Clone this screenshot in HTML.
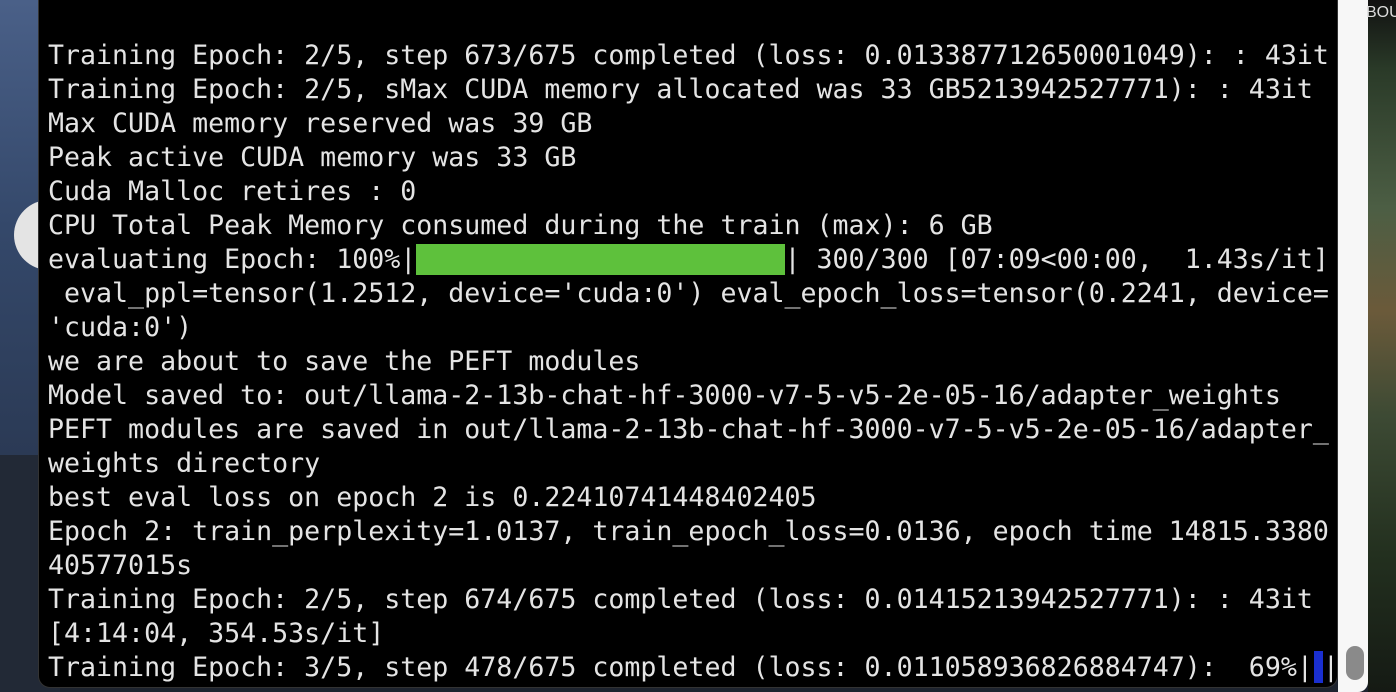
<!DOCTYPE html>
<html><head><meta charset="utf-8"><style>
html,body{margin:0;padding:0}
body{width:1396px;height:692px;overflow:hidden;position:relative;background:#1d232e}
.bgl{position:absolute;left:0;top:0;width:60px;height:455px;background:linear-gradient(180deg,#4a6088 0%,#34486a 50%,#2b3a55 100%)}
.bgl2{position:absolute;left:0;top:455px;width:60px;height:237px;background:#222936}
.circ{position:absolute;left:14px;top:200px;width:70px;height:70px;border-radius:50%;background:#e4e4e4}
.term{position:absolute;left:38px;top:-20px;width:1300px;height:708px;background:#000;border-radius:0 0 12px 12px;border:1px solid #333;box-sizing:border-box}
.white{position:absolute;left:1338px;top:0;width:30px;height:692px;background:#f7f7f7;border-radius:0 0 10px 0}
.img{position:absolute;left:1368px;top:0;width:28px;height:692px;background:linear-gradient(180deg,#111 0%,#2a3a28 10%,#4c5e44 30%,#6b5a3a 45%,#3d4a34 60%,#23301f 80%,#151a14 100%)}
.bou{position:absolute;left:1366px;top:4px;font:16px "Liberation Sans",sans-serif;color:#ddd}
.scroll{position:absolute;left:1346px;top:646px;width:18px;height:34px;border-radius:9px;background:#8a8a8a}
.l{position:absolute;left:48px;margin:0;font:26.6px/34px "DejaVu Sans Mono","Liberation Mono",monospace;color:#e4e4e4;white-space:pre}
.g{background:#5ec13c}
.b{display:inline-block;width:9px;height:32px;background:#1a2fd0;vertical-align:-7px;margin-left:1px}
</style></head><body>
<div class="bgl"></div><div class="bgl2"></div><div class="circ"></div>
<div class="white"></div><div class="img"></div><div class="bou">BOU</div>
<div class="term"></div>
<div class="scroll"></div>
<pre class="l" style="top:39px">Training Epoch: 2/5, step 673/675 completed (loss: 0.013387712650001049): : 43it</pre>
<pre class="l" style="top:73px">Training Epoch: 2/5, sMax CUDA memory allocated was 33 GB5213942527771): : 43it</pre>
<pre class="l" style="top:107px">Max CUDA memory reserved was 39 GB</pre>
<pre class="l" style="top:141px">Peak active CUDA memory was 33 GB</pre>
<pre class="l" style="top:175px">Cuda Malloc retires : 0</pre>
<pre class="l" style="top:209px">CPU Total Peak Memory consumed during the train (max): 6 GB</pre>
<pre class="l" style="top:243px">evaluating Epoch: 100%|<span class="g">                       </span>| 300/300 [07:09&lt;00:00,  1.43s/it]</pre>
<pre class="l" style="top:277px"> eval_ppl=tensor(1.2512, device='cuda:0') eval_epoch_loss=tensor(0.2241, device=</pre>
<pre class="l" style="top:311px">'cuda:0')</pre>
<pre class="l" style="top:345px">we are about to save the PEFT modules</pre>
<pre class="l" style="top:379px">Model saved to: out/llama-2-13b-chat-hf-3000-v7-5-v5-2e-05-16/adapter_weights</pre>
<pre class="l" style="top:413px">PEFT modules are saved in out/llama-2-13b-chat-hf-3000-v7-5-v5-2e-05-16/adapter_</pre>
<pre class="l" style="top:447px">weights directory</pre>
<pre class="l" style="top:481px">best eval loss on epoch 2 is 0.22410741448402405</pre>
<pre class="l" style="top:515px">Epoch 2: train_perplexity=1.0137, train_epoch_loss=0.0136, epoch time 14815.3380</pre>
<pre class="l" style="top:549px">40577015s</pre>
<pre class="l" style="top:583px">Training Epoch: 2/5, step 674/675 completed (loss: 0.01415213942527771): : 43it</pre>
<pre class="l" style="top:617px">[4:14:04, 354.53s/it]</pre>
<pre class="l" style="top:651px">Training Epoch: 3/5, step 478/675 completed (loss: 0.011058936826884747):  69%|<span class="b"></span>|</pre>
</body></html>
